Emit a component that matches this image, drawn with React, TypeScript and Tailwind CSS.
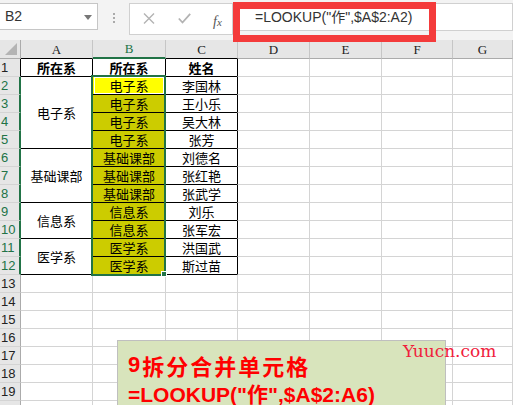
import React from "react";

type Row = { a?: { text: string; span: number }; aHeader?: string; b?: string; c?: string };

const data: Row[] = [
  { aHeader: "所在系", b: "所在系", c: "姓名" },
  { a: { text: "电子系", span: 4 }, b: "电子系", c: "李国林" },
  { b: "电子系", c: "王小乐" },
  { b: "电子系", c: "吴大林" },
  { b: "电子系", c: "张芳" },
  { a: { text: "基础课部", span: 3 }, b: "基础课部", c: "刘德名" },
  { b: "基础课部", c: "张红艳" },
  { b: "基础课部", c: "张武学" },
  { a: { text: "信息系", span: 2 }, b: "信息系", c: "刘乐" },
  { b: "信息系", c: "张军宏" },
  { a: { text: "医学系", span: 2 }, b: "医学系", c: "洪国武" },
  { b: "医学系", c: "斯过苗" },
];

const spanClass: Record<number, string> = {
  2: "row-span-2",
  3: "row-span-3",
  4: "row-span-4",
};

const cellBase = "flex items-center justify-center leading-none";
const tbl = "border-r border-b border-black";
const gl = "border-r border-b border-[#d4d4d4]";

export default function App() {
  const rows: React.ReactNode[] = [];
  for (let r = 1; r <= 20; r++) {
    const d = data[r - 1];
    const sel = r >= 2 && r <= 12;
    rows.push(
      <div
        key={`h${r}`}
        className={`flex items-center bg-[#e6e6e6] pl-[1px] text-[13px] leading-none border-b border-[#d4d4d4] ${
          sel ? "border-r-2 border-r-[#217346] text-[#217346]" : r === 1 ? "border-r border-r-black text-[#222]" : "border-r border-r-[#ababab] text-[#222]"
        }`}
        style={{ fontFamily: '"Liberation Sans", sans-serif' }}
      >
        {r < 20 ? r : ""}
      </div>
    );
    if (d) {
      if (d.aHeader) {
        rows.push(
          <div key={`a${r}`} className={`${cellBase} ${tbl} font-bold`}>
            {d.aHeader}
          </div>
        );
      } else if (d.a) {
        rows.push(
          <div key={`a${r}`} className={`${cellBase} ${tbl} ${spanClass[d.a.span]}`}>
            {d.a.text}
          </div>
        );
      }
      const bBg = r === 2 ? "bg-[#ffff00]" : r === 1 ? "bg-white font-bold" : "bg-[#cccc00]";
      rows.push(
        <div key={`b${r}`} className={`${cellBase} ${tbl} ${bBg}`}>
          {d.b}
        </div>
      );
      rows.push(
        <div key={`c${r}`} className={`${cellBase} ${tbl} ${r === 1 ? "font-bold" : ""}`}>
          {d.c}
        </div>
      );
    } else {
      rows.push(<div key={`a${r}`} className={gl} />);
      rows.push(<div key={`b${r}`} className={gl} />);
      rows.push(<div key={`c${r}`} className={gl} />);
    }
    rows.push(<div key={`d${r}`} className={`${gl} ${r <= 12 ? "border-l border-l-black -ml-px" : ""}`} />);
    rows.push(<div key={`e${r}`} className={gl} />);
    rows.push(<div key={`f${r}`} className={gl} />);
    rows.push(<div key={`g${r}`} className={gl} />);
  }

  const colHdr = "flex items-center justify-center text-[13px] leading-none border-r border-[#c6c6c6] bg-[#e6e6e6] text-[#222]";

  return (
    <div
      className="relative h-[405px] w-[513px] overflow-hidden bg-white text-[13px] text-black"
      style={{ fontFamily: '"Noto Sans CJK SC", "Liberation Sans", sans-serif' }}
    >
      {/* formula toolbar */}
      <div className="flex h-[40px] items-start bg-[#f3f3f3] pt-[3px]">
        <div
          className="relative flex h-[27px] w-[98px] items-center border border-l-0 border-[#c6c6c6] bg-white pl-[5px] text-[14px] text-[#333]"
          style={{ fontFamily: '"Liberation Sans", sans-serif' }}
        >
          B2
          <svg className="absolute right-[5px] top-[11px]" width="8" height="5" viewBox="0 0 8 5">
            <path d="M0 0 L8 0 L4 5 Z" fill="#777" />
          </svg>
        </div>
        <div className="flex h-[30px] w-[31px] flex-col items-center justify-center gap-[2px]">
          <div className="h-[2px] w-[2px] bg-[#aaa]" />
          <div className="h-[2px] w-[2px] bg-[#aaa]" />
          <div className="h-[2px] w-[2px] bg-[#aaa]" />
        </div>
        <div className="flex h-[32px] w-[104px] items-start border border-[#d0d0d0] bg-white pt-[9px]">
          <svg className="ml-[13px]" width="12" height="11" viewBox="0 0 12 11">
            <path d="M1 0.5 L11 10.5 M11 0.5 L1 10.5" stroke="#b3b3b3" strokeWidth="1.4" />
          </svg>
          <svg className="ml-[23px]" width="13" height="11" viewBox="0 0 13 11">
            <path d="M0.8 5.5 L4.5 9.5 L12.2 0.8" stroke="#b3b3b3" strokeWidth="1.8" fill="none" />
          </svg>
          <span
            className="ml-[22px] -mt-[2px] text-[14px] italic text-[#555]"
            style={{ fontFamily: '"Liberation Serif", serif' }}
          >
            f<span className="text-[11px]">x</span>
          </span>
        </div>
        <div
          className="flex h-[28px] flex-1 items-center border border-[#d0d0d0] bg-white pl-[21px] text-[14px] text-[#333]"
          style={{ fontFamily: '"Liberation Sans", "Noto Sans CJK SC", sans-serif' }}
        >
          =LOOKUP("作",$A$2:A2)
        </div>
      </div>

      {/* sheet */}
      <div className="relative">
        <div className="grid grid-cols-[21px_72px_73px_72px_72px_72px_71px_1fr] grid-rows-[19px_repeat(20,18px)]">
          <div className="relative border-r border-b border-[#ababab] bg-[#e6e6e6]">
            <svg className="absolute bottom-[3px] right-[3px]" width="12" height="12" viewBox="0 0 12 12">
              <path d="M12 0 L12 12 L0 12 Z" fill="#b4b4b4" />
            </svg>
          </div>
          {["A", "B", "C", "D", "E", "F", "G"].map((c) => (
            <div
              key={c}
              className={`${colHdr} ${
                c === "B"
                  ? "bg-[#d2d2d2] text-[#217346] border-b-2 border-b-[#217346]"
                  : c === "A" || c === "C"
                  ? "border-b border-b-black"
                  : "border-b border-b-[#ababab]"
              }`}
              style={{ fontFamily: '"Liberation Serif", serif' }}
            >
              {c}
            </div>
          ))}
          {rows}
        </div>

        {/* selection */}
        <div className="pointer-events-none absolute left-[91px] top-[35px] h-[201px] w-[75px] border-2 border-[#217346]" />
        <div className="pointer-events-none absolute left-[94px] top-[37px] h-[17px] w-[70px] border border-white" />
        <div className="absolute left-[161px] top-[231px] h-[6px] w-[6px] border border-white bg-[#217346]" />
      </div>

      {/* red highlight box */}
      <div className="pointer-events-none absolute left-[233px] top-[2px] h-[40px] w-[203px] border-[7px] border-[#f43b3b]" />

      {/* note box */}
      <div className="absolute left-[117px] top-[340px] h-[80px] w-[329px] border border-[#bfbfbf] bg-[#d8e4bc] pl-[10px] pt-[12px] font-bold text-[#ff0000]">
        <div className="flex h-[24px] items-center text-[22px] leading-none tracking-[2px]">
          <span style={{ fontFamily: '"Liberation Sans", sans-serif' }}>9</span>拆分合并单元格
        </div>
        <div
          className="mt-[5px] flex h-[24px] items-center text-[21px] leading-none"
          style={{ fontFamily: '"Liberation Sans", "Noto Sans CJK SC", sans-serif' }}
        >
          =LOOKUP("作",$A$2:A6)
        </div>
      </div>

      {/* watermark */}
      <div
        className="absolute left-[403px] top-[343px] text-[17px] leading-none text-[#f0203c]"
        style={{ fontFamily: '"DejaVu Serif", serif' }}
      >
        Yuucn.com
      </div>
    </div>
  );
}
